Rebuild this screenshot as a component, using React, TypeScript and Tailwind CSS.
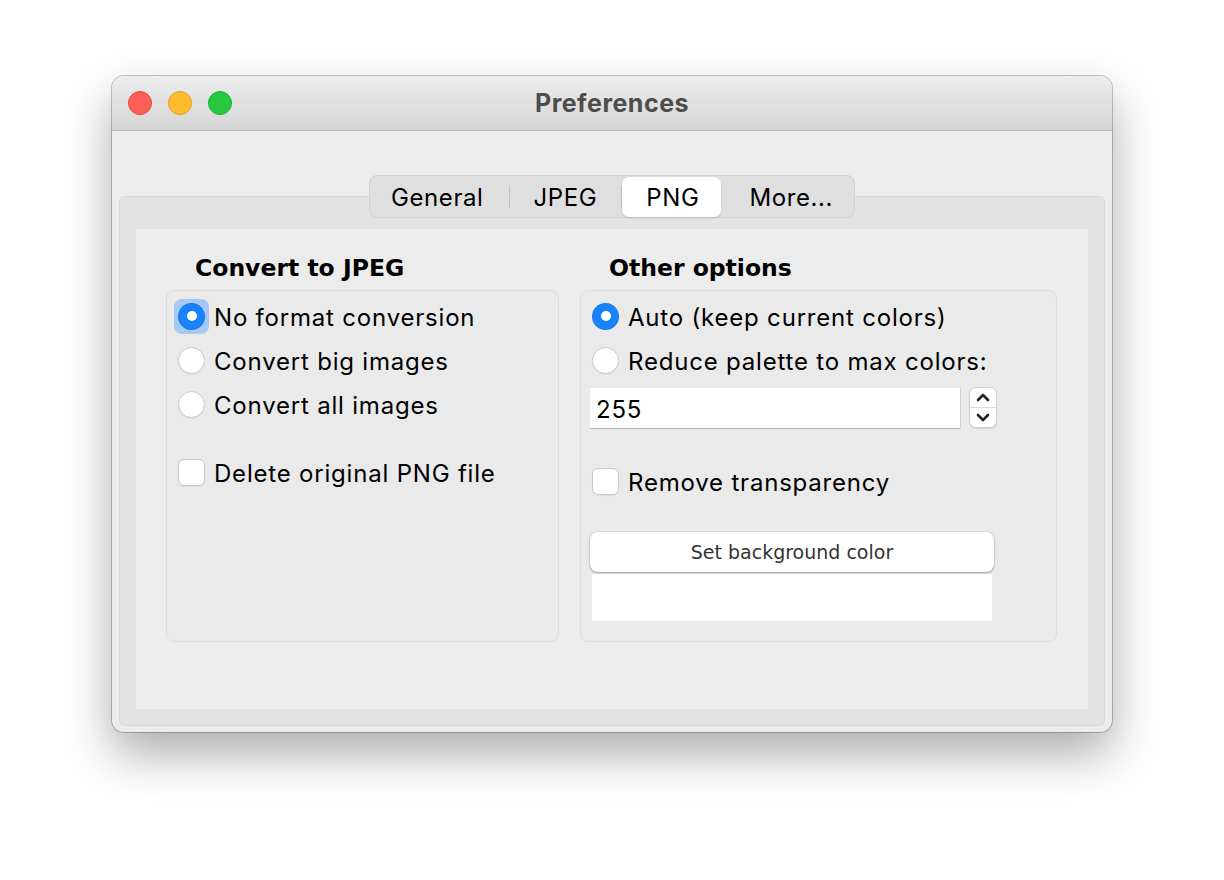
import React from "react";

const ui = { fontFamily: "Inter, 'Noto Sans', sans-serif" };
const lucida = { fontFamily: "'DejaVu Sans', 'Noto Sans', sans-serif" };

function Radio({ checked = false, focus = false }: { checked?: boolean; focus?: boolean }) {
  const dot = checked ? (
    <span className="flex h-[27px] w-[27px] items-center justify-center rounded-full bg-[#1a82fb] shadow-[inset_0_0_0_1px_rgba(0,0,0,0.08)]">
      <span className="h-[10px] w-[10px] rounded-full bg-white" />
    </span>
  ) : (
    <span className="h-[27px] w-[27px] rounded-full border border-[#c9c9c9] bg-white shadow-[0_1px_1px_rgba(0,0,0,0.05)]" />
  );
  if (focus) {
    return <span className="-m-[4px] flex rounded-[8px] bg-[#a3c9f4] p-[4px]">{dot}</span>;
  }
  return dot;
}

function Check() {
  return <span className="h-[27px] w-[27px] rounded-[6px] border border-[#c9c9c9] bg-white shadow-[0_1px_1px_rgba(0,0,0,0.05)]" />;
}

function Row({ children, label }: { children: React.ReactNode; label: string }) {
  return (
    <div className="flex h-[44px] items-center gap-[9px]">
      {children}
      <span className="pt-[4px] text-[24px] tracking-[0.8px] text-black" style={ui}>{label}</span>
    </div>
  );
}

export default function App() {
  return (
    <div className="h-[880px] w-[1224px] bg-white pl-[112px] pt-[76px]">
      <div className="flex h-[656px] w-[1000px] flex-col overflow-hidden rounded-[12px] bg-[#ececec] shadow-[0_0_0_1px_rgba(0,0,0,0.22),0_22px_48px_rgba(0,0,0,0.33)]">
        {/* title bar */}
        <div className="grid h-[55px] grid-cols-[1fr_auto_1fr] items-center border-b border-[#b8b8b8] bg-gradient-to-b from-[#ececec] to-[#d6d6d6] px-[16px]">
          <div className="flex gap-[16px]">
            <span className="h-[24px] w-[24px] rounded-full border border-[#e2463f] bg-[#fe5f57]" />
            <span className="h-[24px] w-[24px] rounded-full border border-[#e1a116] bg-[#febc2e]" />
            <span className="h-[24px] w-[24px] rounded-full border border-[#1aab29] bg-[#28c840]" />
          </div>
          <div className="pt-[2px] text-[25px] font-bold tracking-[0.5px] text-[#4d4d4d]" style={ui}>Preferences</div>
          <div />
        </div>

        {/* body */}
        <div className="flex flex-1 flex-col px-[7px] pb-[6px] pt-[44px]">
          <div className="relative z-10 flex justify-center">
            <div className="flex h-[43px] items-center rounded-[8px] border border-[#d2d2d2] bg-[#dedede]/90 p-[1px] text-[24px] tracking-[0.6px] text-black" style={ui}>
              <div className="pl-[20px] pr-[25px] pt-[2px]">General</div>
              <div className="h-[22px] w-px bg-[#c4c4c4]" />
              <div className="px-[24px] pt-[2px]">JPEG</div>
              <div className="h-[22px] w-px bg-[#c4c4c4]" />
              <div className="flex h-[40px] items-center rounded-[7px] bg-white pl-[24px] pr-[22px] pt-[2px] shadow-[0_1px_2px_rgba(0,0,0,0.15)]">PNG</div>
              <div className="pl-[28px] pr-[20px] pt-[2px]">More...</div>
            </div>
          </div>

          <div className="-mt-[22px] flex flex-1 flex-col rounded-[6px] border border-[#d8d8d8] bg-[#e3e3e3] px-[16px] pb-[16px] pt-[32px]">
            <div className="flex flex-1 gap-[21px] bg-[#ececec] px-[30px] pt-[20px]">
              {/* left column */}
              <div className="flex w-[393px] flex-col">
                <div className="flex h-[34px] items-center pl-[29px] pt-[5px] text-[23.5px] font-bold text-black" style={lucida}>Convert to JPEG</div>
                <div className="mt-[7px] flex h-[352px] flex-col rounded-[8px] border border-[#dcdcdc] bg-[#eaeaea] px-[11px] pt-[3px]">
                  <Row label="No format conversion"><Radio checked focus /></Row>
                  <Row label="Convert big images"><Radio /></Row>
                  <Row label="Convert all images"><Radio /></Row>
                  <div className="mt-[24px]">
                    <Row label="Delete original PNG file"><Check /></Row>
                  </div>
                </div>
              </div>

              {/* right column */}
              <div className="flex w-[477px] flex-col">
                <div className="flex h-[34px] items-center pl-[29px] pt-[5px] text-[23.5px] font-bold text-black" style={lucida}>Other options</div>
                <div className="mt-[7px] flex h-[352px] flex-col rounded-[8px] border border-[#dcdcdc] bg-[#eaeaea] px-[11px] pt-[3px]">
                  <Row label="Auto (keep current colors)"><Radio checked /></Row>
                  <Row label="Reduce palette to max colors:"><Radio /></Row>
                  <div className="-ml-[2px] mt-[5px] flex items-center gap-[9px]">
                    <div className="flex h-[40px] w-[370px] items-center bg-white pl-[6px] pt-[4px] text-[24px] tracking-[0.8px] text-black shadow-[0_1px_0_#b0b0b0,1px_0_0_#d0d0d0]" style={ui}>255</div>
                    <div className="flex h-[41px] w-[28px] flex-col rounded-[7px] border border-[#cfcfcf] bg-white shadow-[0_1px_1px_rgba(0,0,0,0.1)]">
                      <div className="flex flex-1 items-center justify-center border-b border-[#dcdcdc]">
                        <svg width="14" height="9" viewBox="0 0 14 9"><path d="M2 7 L7 2 L12 7" fill="none" stroke="#222" strokeWidth="2.6" strokeLinecap="round" strokeLinejoin="round" /></svg>
                      </div>
                      <div className="flex flex-1 items-center justify-center">
                        <svg width="14" height="9" viewBox="0 0 14 9"><path d="M2 2 L7 7 L12 2" fill="none" stroke="#222" strokeWidth="2.6" strokeLinecap="round" strokeLinejoin="round" /></svg>
                      </div>
                    </div>
                  </div>
                  <div className="mt-[31px]">
                    <Row label="Remove transparency"><Check /></Row>
                  </div>
                  <div className="-ml-[2px] mt-[29px] flex h-[40px] w-[404px] items-center justify-center rounded-[8px] bg-white text-[19px] text-[#333] shadow-[0_0_0_1px_rgba(0,0,0,0.06),0_1px_2px_rgba(0,0,0,0.3)]" style={lucida}>Set background color</div>
                  <div className="mt-[2px] h-[47px] w-[400px] bg-white" />
                </div>
              </div>
            </div>
          </div>
        </div>
      </div>
    </div>
  );
}
